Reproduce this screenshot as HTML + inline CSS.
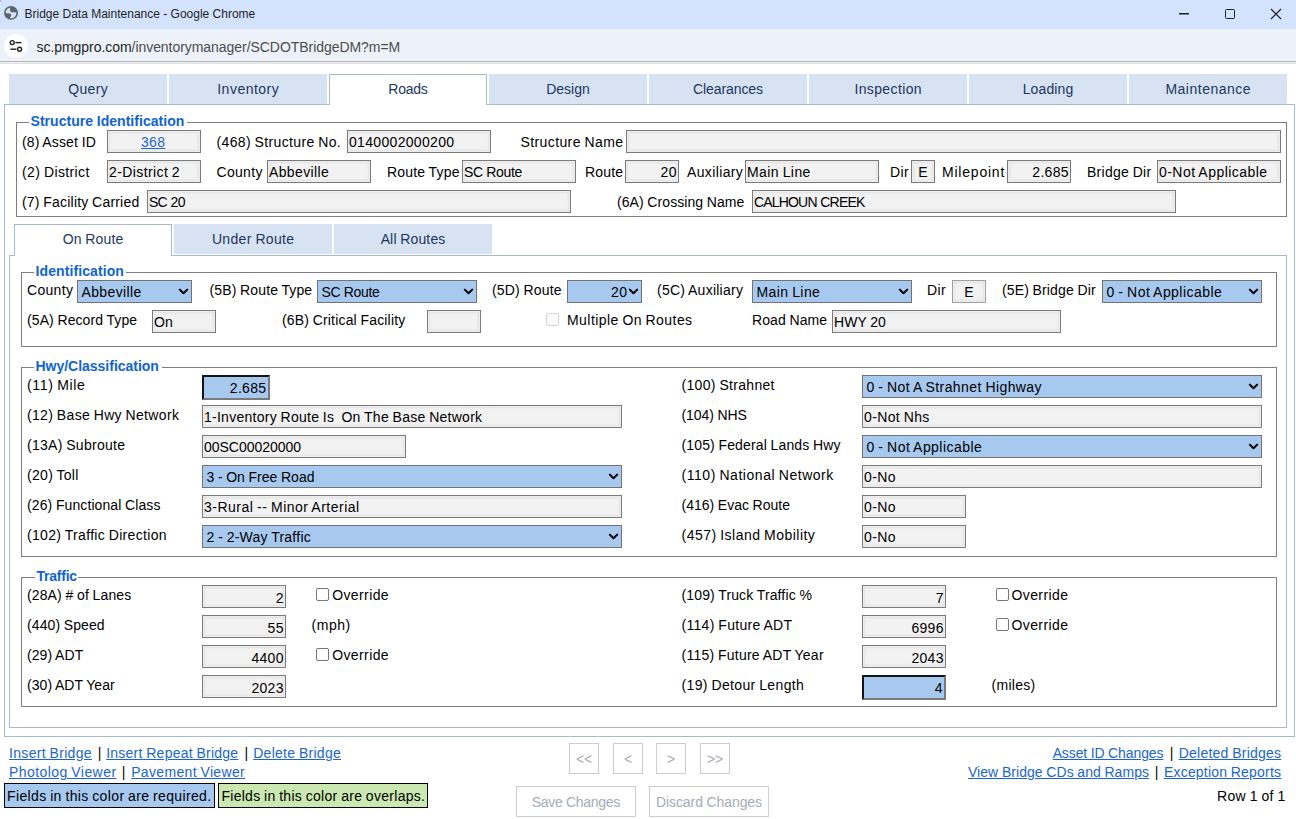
<!DOCTYPE html><html><head><meta charset="utf-8"><title>Bridge Data Maintenance</title><style>
*{margin:0;padding:0;box-sizing:border-box}
html,body{width:1296px;height:819px;overflow:hidden;background:#fff;font-family:"Liberation Sans",sans-serif;font-size:14px;color:#000}
body{position:relative}
.t{position:absolute;white-space:nowrap;line-height:16px;font-size:14px}
.inp{position:absolute;border:1px solid #7a7a7a;background:#f2f2f2;box-shadow:inset 0 0 0 1px #ededed, inset 0 0 2px 2px #e3e3e3}
.inpl{position:absolute;border:1px solid #a0a0a0;background:#f2f2f2;box-shadow:inset 0 0 0 1px #ededed, inset 0 0 2px 2px #e3e3e3}
.sel{position:absolute;border:1px solid #737373;background:#a7c9ef}
.foc{position:absolute;border:2px solid;border-color:#141414 #7a7a7a #7a7a7a #141414;background:#a7c9ef}
.chev{position:absolute}
.cb{position:absolute;border:1px solid #767676;border-radius:2px;background:#fff}
.cbd{position:absolute;border:1px solid #d4d4d4;border-radius:2px;background:#fafafa}
.fs{position:absolute;border:1px solid #7d7d7d}
.gap{position:absolute;background:#fff}
.leg{font-weight:bold;color:#0f64cf}
.tab{position:absolute;background:#d7e3f2}
.tabtxt{color:#22375e}
.pnl{position:absolute;border:1px solid #a5b9d2}
.lnk{color:#1a66cc;text-decoration:underline}
.navb{position:absolute;border:1px solid #cdcdcd;background:#fff}
.gray{color:#a3abb7}
</style></head><body>
<div style="position:absolute;left:0;top:0;width:1296px;height:29px;background:#d3e3fd"></div>
<div style="position:absolute;left:0;top:29px;width:1296px;height:32px;background:#edf2fa"></div>
<div style="position:absolute;left:0;top:60px;width:1296px;height:1px;background:#f0f4fc"></div>
<div style="position:absolute;left:0;top:61px;width:1296px;height:1px;background:#b4b4b4"></div>
<div style="position:absolute;left:0;top:62px;width:1296px;height:1px;background:#edf1f8"></div>
<div style="position:absolute;left:0;top:63px;width:1296px;height:1px;background:#e1e2df"></div>
<div style="position:absolute;left:0;top:0;width:2px;height:2px;background:#b9bdc6;border-bottom-right-radius:2px"></div>
<svg style="position:absolute;left:0px;top:0px" width="24" height="26" viewBox="0 0 24 26"><circle cx="11" cy="12.9" r="6.15" fill="none" stroke="#5f6368" stroke-width="1.6"/><path d="M10 7.2 C11.5 6.9 14.5 7.3 16.2 9.2 C17 10.2 17.3 11.2 17.3 12.3 C16 12.5 14.6 12.1 13.4 12.3 C12 12.5 10.6 12.2 10.3 11.2 C10.1 10.3 10.1 8.4 10 7.2Z" fill="#5f6368"/><path d="M4.9 13.3 C6.4 13.4 8.6 13.2 10 13.6 C11.2 14 11.6 15.2 11 16.2 C10.4 17.2 9.6 17.8 9.2 18.8 C7 18.3 5.2 16.2 4.9 13.3Z" fill="#5f6368"/></svg>
<div class="t " style="left:24.5px;top:6.34px;font-size:12px;color:#1f1f1f">Bridge Data Maintenance - Google Chrome</div>
<div style="position:absolute;left:1179px;top:13px;width:10px;height:1px;background:#1f1f1f;box-shadow:0 0.5px 0 #1f1f1f"></div>
<div style="position:absolute;left:1225px;top:9px;width:10px;height:10px;border:1px solid #1f1f1f;border-radius:1.5px"></div>
<svg style="position:absolute;left:1270px;top:8px" width="12" height="12" viewBox="0 0 12 12"><path d="M1 1 L11 11 M11 1 L1 11" stroke="#1f1f1f" stroke-width="1.1"/></svg>
<div style="position:absolute;left:4px;top:34px;width:24px;height:24px;border-radius:12px;background:#fff"></div>
<svg style="position:absolute;left:8px;top:38px" width="16" height="16" viewBox="0 0 16 16"><circle cx="4.2" cy="4.6" r="2" fill="none" stroke="#1f1f1f" stroke-width="1.4"/><path d="M7.4 4.6 H13.4" stroke="#1f1f1f" stroke-width="1.4"/><circle cx="11.6" cy="11.2" r="2" fill="none" stroke="#1f1f1f" stroke-width="1.4"/><path d="M2.4 11.2 H8.4" stroke="#1f1f1f" stroke-width="1.4"/></svg>
<div class="t " style="left:36.5px;top:38.53px;color:#1f1f1f;letter-spacing:-0.05px">sc.pmgpro.com<span style="color:#4d4d4d">/inventorymanager/SCDOTBridgeDM?m=M</span></div>
<div class="pnl" style="left:4px;top:104px;width:1291px;height:633px"></div>
<div class="tab" style="left:9px;top:74px;width:158px;height:30px"></div>
<div class="t tabtxt" style="left:-211.80921875px;width:600px;text-align:center;top:81.13px;letter-spacing:0.382px;word-spacing:0.000px;">Query</div>
<div class="tab" style="left:169px;top:74px;width:158px;height:30px"></div>
<div class="t tabtxt" style="left:-51.75468749999999px;width:600px;text-align:center;top:81.13px;letter-spacing:0.491px;word-spacing:0.000px;">Inventory</div>
<div style="position:absolute;left:329px;top:74px;width:158px;height:31px;background:#fff;border:1px solid #a5b9d2;border-bottom:none"></div>
<div class="t tabtxt" style="left:107.86562500000002px;width:600px;text-align:center;top:81.13px;letter-spacing:-0.269px;word-spacing:0.000px;">Roads</div>
<div class="tab" style="left:489px;top:74px;width:158px;height:30px"></div>
<div class="t tabtxt" style="left:268.0076822916667px;width:600px;text-align:center;top:81.13px;letter-spacing:0.015px;word-spacing:0.000px;">Design</div>
<div class="tab" style="left:649px;top:74px;width:158px;height:30px"></div>
<div class="t tabtxt" style="left:427.9659375px;width:600px;text-align:center;top:81.13px;letter-spacing:-0.068px;word-spacing:0.000px;">Clearances</div>
<div class="tab" style="left:809px;top:74px;width:158px;height:30px"></div>
<div class="t tabtxt" style="left:588.188359375px;width:600px;text-align:center;top:81.13px;letter-spacing:0.377px;word-spacing:0.000px;">Inspection</div>
<div class="tab" style="left:969px;top:74px;width:158px;height:30px"></div>
<div class="t tabtxt" style="left:748.0726562499999px;width:600px;text-align:center;top:81.13px;letter-spacing:0.145px;word-spacing:0.000px;">Loading</div>
<div class="tab" style="left:1129px;top:74px;width:158px;height:30px"></div>
<div class="t tabtxt" style="left:908.2482244318182px;width:600px;text-align:center;top:81.13px;letter-spacing:0.496px;word-spacing:0.000px;">Maintenance</div>
<div class="fs" style="left:16px;top:122px;width:1271px;height:95px"></div>
<div class="gap" style="left:29px;top:121px;width:158px;height:3px"></div>
<div class="t leg" style="left:30.5px;top:113.33px;letter-spacing:0.040px;word-spacing:-0.312px;">Structure Identification</div>
<div class="t " style="left:22.0px;top:134.03px;letter-spacing:0.134px;word-spacing:-0.406px;">(8) Asset ID</div>
<div class="inp" style="left:107px;top:130px;width:94px;height:23px;"></div>
<div class="t lnk" style="left:-146.83828125px;width:600px;text-align:center;top:134.33px;letter-spacing:0.323px;word-spacing:0.000px;">368</div>
<div class="t " style="left:216.5px;top:134.03px;letter-spacing:0.360px;word-spacing:-0.632px;">(468) Structure No.</div>
<div class="inp" style="left:347px;top:130px;width:144px;height:23px;"></div>
<div class="t " style="left:349.0px;top:134.33px;letter-spacing:0.323px;word-spacing:0.000px;">0140002000200</div>
<div class="t " style="left:520.5px;top:134.03px;letter-spacing:0.396px;word-spacing:-0.668px;">Structure Name</div>
<div class="inp" style="left:626px;top:130px;width:655px;height:23px;"></div>
<div class="t " style="left:22.0px;top:164.03px;letter-spacing:0.387px;word-spacing:-0.659px;">(2) District</div>
<div class="inp" style="left:107px;top:160px;width:94px;height:23px;"></div>
<div class="t " style="left:109.0px;top:164.33px;letter-spacing:0.403px;word-spacing:-0.675px;">2-District 2</div>
<div class="t " style="left:216.5px;top:164.03px;letter-spacing:0.313px;word-spacing:0.000px;">County</div>
<div class="inp" style="left:267px;top:160px;width:104px;height:23px;"></div>
<div class="t " style="left:269.0px;top:164.33px;letter-spacing:0.371px;word-spacing:0.000px;">Abbeville</div>
<div class="t " style="left:387.0px;top:164.03px;letter-spacing:0.175px;word-spacing:-0.447px;">Route Type</div>
<div class="inp" style="left:462px;top:160px;width:114px;height:23px;"></div>
<div class="t " style="left:464.0px;top:164.33px;letter-spacing:-0.367px;word-spacing:0.096px;">SC Route</div>
<div class="t " style="left:585.0px;top:164.03px;letter-spacing:0.199px;word-spacing:0.000px;">Route</div>
<div class="inp" style="left:625px;top:160px;width:54px;height:23px;"></div>
<div class="t " style="right:619.1765625px;top:164.33px;letter-spacing:0.323px;word-spacing:0.000px;">20</div>
<div class="t " style="left:687.0px;top:164.03px;letter-spacing:0.363px;word-spacing:0.000px;">Auxiliary</div>
<div class="inp" style="left:745px;top:160px;width:134px;height:23px;"></div>
<div class="t " style="left:747.0px;top:164.33px;letter-spacing:0.422px;word-spacing:-0.694px;">Main Line</div>
<div class="t " style="left:890.0px;top:164.03px;letter-spacing:0.403px;word-spacing:0.000px;">Dir</div>
<div class="inp" style="left:911px;top:160px;width:24px;height:23px;"></div>
<div class="t " style="left:623.0px;width:600px;text-align:center;top:164.33px;letter-spacing:0.000px;word-spacing:0.000px;">E</div>
<div class="t " style="left:942.0px;top:164.03px;letter-spacing:0.788px;word-spacing:0.000px;">Milepoint</div>
<div class="inp" style="left:1007px;top:160px;width:64px;height:23px;"></div>
<div class="t " style="right:227.21125000000006px;top:164.33px;letter-spacing:0.289px;word-spacing:0.000px;">2.685</div>
<div class="t " style="left:1087.0px;top:164.03px;letter-spacing:0.273px;word-spacing:-0.545px;">Bridge Dir</div>
<div class="inp" style="left:1157px;top:160px;width:124px;height:23px;"></div>
<div class="t " style="left:1159.0px;top:164.33px;letter-spacing:0.455px;word-spacing:-0.727px;">0-Not Applicable</div>
<div class="t " style="left:22.0px;top:194.03px;letter-spacing:0.200px;word-spacing:-0.472px;">(7) Facility Carried</div>
<div class="inp" style="left:147px;top:190px;width:424px;height:23px;"></div>
<div class="t " style="left:149.0px;top:194.33px;letter-spacing:-0.730px;word-spacing:0.458px;">SC 20</div>
<div class="t " style="left:617.0px;top:194.03px;letter-spacing:0.074px;word-spacing:-0.346px;">(6A) Crossing Name</div>
<div class="inp" style="left:752px;top:190px;width:424px;height:23px;"></div>
<div class="t " style="left:754.0px;top:194.33px;letter-spacing:-0.822px;word-spacing:0.550px;">CALHOUN CREEK</div>
<div class="pnl" style="left:9px;top:255px;width:1278px;height:473px"></div>
<div style="position:absolute;left:14px;top:224px;width:158px;height:32px;background:#fff;border:1px solid #a5b9d2;border-bottom:none"></div>
<div class="t tabtxt" style="left:-206.90580357142858px;width:600px;text-align:center;top:231.33px;letter-spacing:0.188px;word-spacing:-0.460px;">On Route</div>
<div class="tab" style="left:174px;top:224px;width:158px;height:30px"></div>
<div class="t tabtxt" style="left:-46.826015625px;width:600px;text-align:center;top:231.33px;letter-spacing:0.348px;word-spacing:-0.620px;">Under Route</div>
<div class="tab" style="left:334px;top:224px;width:158px;height:30px"></div>
<div class="t tabtxt" style="left:113.07187499999998px;width:600px;text-align:center;top:231.33px;letter-spacing:0.144px;word-spacing:-0.416px;">All Routes</div>
<div class="fs" style="left:21px;top:272px;width:1256px;height:75px"></div>
<div class="gap" style="left:34px;top:271px;width:92px;height:3px"></div>
<div class="t leg" style="left:35.5px;top:263.33px;letter-spacing:0.098px;word-spacing:0.000px;">Identification</div>
<div class="t " style="left:27.0px;top:282.13px;letter-spacing:0.313px;word-spacing:0.000px;">County</div>
<div class="sel" style="left:77px;top:280px;width:115px;height:23px;"></div>
<svg class="chev" style="left:178px;top:288px" width="11" height="8" viewBox="0 0 11 8"><path d="M1.8 1.6 L5.5 5.3 L9.2 1.6" fill="none" stroke="#000" stroke-width="2" stroke-linecap="round" stroke-linejoin="round"/></svg>
<div class="t " style="left:81.5px;top:284.33px;letter-spacing:0.371px;word-spacing:0.000px;">Abbeville</div>
<div class="t " style="left:209.5px;top:282.13px;letter-spacing:0.126px;word-spacing:-0.398px;">(5B) Route Type</div>
<div class="sel" style="left:317px;top:280px;width:160px;height:23px;"></div>
<svg class="chev" style="left:463px;top:288px" width="11" height="8" viewBox="0 0 11 8"><path d="M1.8 1.6 L5.5 5.3 L9.2 1.6" fill="none" stroke="#000" stroke-width="2" stroke-linecap="round" stroke-linejoin="round"/></svg>
<div class="t " style="left:321.5px;top:284.33px;letter-spacing:-0.367px;word-spacing:0.096px;">SC Route</div>
<div class="t " style="left:492.0px;top:282.13px;letter-spacing:0.159px;word-spacing:-0.431px;">(5D) Route</div>
<div class="sel" style="left:567px;top:280px;width:75px;height:23px;"></div>
<svg class="chev" style="left:628px;top:288px" width="11" height="8" viewBox="0 0 11 8"><path d="M1.8 1.6 L5.5 5.3 L9.2 1.6" fill="none" stroke="#000" stroke-width="2" stroke-linecap="round" stroke-linejoin="round"/></svg>
<div class="t " style="right:668.6765625px;top:284.33px;letter-spacing:0.323px;word-spacing:0.000px;">20</div>
<div class="t " style="left:657.0px;top:282.13px;letter-spacing:0.243px;word-spacing:-0.515px;">(5C) Auxiliary</div>
<div class="sel" style="left:752px;top:280px;width:160px;height:23px;"></div>
<svg class="chev" style="left:898px;top:288px" width="11" height="8" viewBox="0 0 11 8"><path d="M1.8 1.6 L5.5 5.3 L9.2 1.6" fill="none" stroke="#000" stroke-width="2" stroke-linecap="round" stroke-linejoin="round"/></svg>
<div class="t " style="left:756.5px;top:284.33px;letter-spacing:0.422px;word-spacing:-0.694px;">Main Line</div>
<div class="t " style="left:927.0px;top:282.13px;letter-spacing:0.403px;word-spacing:0.000px;">Dir</div>
<div class="inpl" style="left:952px;top:280px;width:34px;height:23px;"></div>
<div class="t " style="left:669.0px;width:600px;text-align:center;top:284.33px;letter-spacing:0.000px;word-spacing:0.000px;">E</div>
<div class="t " style="left:1002.0px;top:282.13px;letter-spacing:0.126px;word-spacing:-0.398px;">(5E) Bridge Dir</div>
<div class="sel" style="left:1102px;top:280px;width:160px;height:23px;"></div>
<svg class="chev" style="left:1248px;top:288px" width="11" height="8" viewBox="0 0 11 8"><path d="M1.8 1.6 L5.5 5.3 L9.2 1.6" fill="none" stroke="#000" stroke-width="2" stroke-linecap="round" stroke-linejoin="round"/></svg>
<div class="t " style="left:1106.5px;top:284.33px;letter-spacing:0.455px;word-spacing:-0.727px;">0 - Not Applicable</div>
<div class="t " style="left:27.0px;top:312.13px;letter-spacing:0.091px;word-spacing:-0.363px;">(5A) Record Type</div>
<div class="inp" style="left:152px;top:310px;width:64px;height:23px;"></div>
<div class="t " style="left:154.0px;top:314.33px;letter-spacing:0.162px;word-spacing:0.000px;">On</div>
<div class="t " style="left:282.0px;top:312.13px;letter-spacing:0.168px;word-spacing:-0.440px;">(6B) Critical Facility</div>
<div class="inp" style="left:427px;top:310px;width:54px;height:23px;"></div>
<div class="cbd" style="left:546px;top:313px;width:13px;height:13px;"></div>
<div class="t " style="left:567.0px;top:312.13px;letter-spacing:0.440px;word-spacing:-0.712px;">Multiple On Routes</div>
<div class="t " style="left:752.0px;top:312.13px;letter-spacing:0.098px;word-spacing:-0.370px;">Road Name</div>
<div class="inp" style="left:832px;top:310px;width:229px;height:23px;"></div>
<div class="t " style="left:834.0px;top:314.33px;letter-spacing:0.048px;word-spacing:-0.319px;">HWY 20</div>
<div class="fs" style="left:21px;top:367px;width:1256px;height:190px"></div>
<div class="gap" style="left:34px;top:366px;width:128px;height:3px"></div>
<div class="t leg" style="left:35.5px;top:358.33px;letter-spacing:-0.019px;word-spacing:0.000px;">Hwy/Classification</div>
<div class="t " style="left:27.0px;top:377.33px;letter-spacing:0.672px;word-spacing:-0.944px;">(11) Mile</div>
<div class="t " style="left:27.0px;top:407.33px;letter-spacing:0.334px;word-spacing:-0.606px;">(12) Base Hwy Network</div>
<div class="t " style="left:27.0px;top:437.33px;letter-spacing:0.277px;word-spacing:-0.549px;">(13A) Subroute</div>
<div class="t " style="left:27.0px;top:467.33px;letter-spacing:0.303px;word-spacing:-0.575px;">(20) Toll</div>
<div class="t " style="left:27.0px;top:497.33px;letter-spacing:0.096px;word-spacing:-0.368px;">(26) Functional Class</div>
<div class="t " style="left:27.0px;top:527.33px;letter-spacing:0.330px;word-spacing:-0.601px;">(102) Traffic Direction</div>
<div class="foc" style="left:202px;top:375px;width:68px;height:25px;"></div>
<div class="t " style="right:1029.71125px;top:379.83px;letter-spacing:0.289px;word-spacing:0.000px;">2.685</div>
<div class="inp" style="left:202px;top:405px;width:420px;height:23px;"></div>
<div class="t " style="left:204.0px;top:409.33px;letter-spacing:0.262px;word-spacing:-0.534px;">1-Inventory Route Is&nbsp; On The Base Network</div>
<div class="inp" style="left:202px;top:435px;width:204px;height:23px;"></div>
<div class="t " style="left:204.0px;top:439.33px;letter-spacing:-0.028px;word-spacing:0.000px;">00SC00020000</div>
<div class="sel" style="left:202px;top:465px;width:420px;height:23px;"></div>
<svg class="chev" style="left:608px;top:473px" width="11" height="8" viewBox="0 0 11 8"><path d="M1.8 1.6 L5.5 5.3 L9.2 1.6" fill="none" stroke="#000" stroke-width="2" stroke-linecap="round" stroke-linejoin="round"/></svg>
<div class="t " style="left:206.5px;top:468.83px;letter-spacing:0.011px;word-spacing:-0.283px;">3 - On Free Road</div>
<div class="inp" style="left:202px;top:495px;width:420px;height:23px;"></div>
<div class="t " style="left:204.0px;top:499.33px;letter-spacing:0.501px;word-spacing:-0.773px;">3-Rural -- Minor Arterial</div>
<div class="sel" style="left:202px;top:525px;width:420px;height:23px;"></div>
<svg class="chev" style="left:608px;top:533px" width="11" height="8" viewBox="0 0 11 8"><path d="M1.8 1.6 L5.5 5.3 L9.2 1.6" fill="none" stroke="#000" stroke-width="2" stroke-linecap="round" stroke-linejoin="round"/></svg>
<div class="t " style="left:206.5px;top:528.83px;letter-spacing:0.241px;word-spacing:-0.513px;">2 - 2-Way Traffic</div>
<div class="t " style="left:681.5px;top:377.33px;letter-spacing:0.315px;word-spacing:-0.587px;">(100) Strahnet</div>
<div class="t " style="left:681.5px;top:407.33px;letter-spacing:-0.070px;word-spacing:-0.202px;">(104) NHS</div>
<div class="t " style="left:681.5px;top:437.33px;letter-spacing:0.137px;word-spacing:-0.409px;">(105) Federal Lands Hwy</div>
<div class="t " style="left:681.5px;top:467.33px;letter-spacing:0.538px;word-spacing:-0.810px;">(110) National Network</div>
<div class="t " style="left:681.5px;top:497.33px;letter-spacing:0.006px;word-spacing:-0.277px;">(416) Evac Route</div>
<div class="t " style="left:681.5px;top:527.33px;letter-spacing:0.480px;word-spacing:-0.751px;">(457) Island Mobility</div>
<div class="sel" style="left:862px;top:375px;width:400px;height:23px;"></div>
<svg class="chev" style="left:1248px;top:383px" width="11" height="8" viewBox="0 0 11 8"><path d="M1.8 1.6 L5.5 5.3 L9.2 1.6" fill="none" stroke="#000" stroke-width="2" stroke-linecap="round" stroke-linejoin="round"/></svg>
<div class="t " style="left:866.5px;top:378.83px;letter-spacing:0.417px;word-spacing:-0.689px;">0 - Not A Strahnet Highway</div>
<div class="inp" style="left:862px;top:405px;width:400px;height:23px;"></div>
<div class="t " style="left:864.0px;top:409.33px;letter-spacing:0.374px;word-spacing:-0.646px;">0-Not Nhs</div>
<div class="sel" style="left:862px;top:435px;width:400px;height:23px;"></div>
<svg class="chev" style="left:1248px;top:443px" width="11" height="8" viewBox="0 0 11 8"><path d="M1.8 1.6 L5.5 5.3 L9.2 1.6" fill="none" stroke="#000" stroke-width="2" stroke-linecap="round" stroke-linejoin="round"/></svg>
<div class="t " style="left:866.5px;top:438.83px;letter-spacing:0.455px;word-spacing:-0.727px;">0 - Not Applicable</div>
<div class="inp" style="left:862px;top:465px;width:400px;height:23px;"></div>
<div class="t " style="left:864.0px;top:469.33px;letter-spacing:0.357px;word-spacing:0.000px;">0-No</div>
<div class="inp" style="left:862px;top:495px;width:104px;height:23px;"></div>
<div class="t " style="left:864.0px;top:499.33px;letter-spacing:0.357px;word-spacing:0.000px;">0-No</div>
<div class="inp" style="left:862px;top:525px;width:104px;height:23px;"></div>
<div class="t " style="left:864.0px;top:529.33px;letter-spacing:0.357px;word-spacing:0.000px;">0-No</div>
<div class="fs" style="left:21px;top:577px;width:1256px;height:130px"></div>
<div class="gap" style="left:35px;top:576px;width:43px;height:3px"></div>
<div class="t leg" style="left:36.5px;top:568.33px;letter-spacing:-0.235px;word-spacing:0.000px;">Traffic</div>
<div class="t " style="left:27.0px;top:587.33px;letter-spacing:0.127px;word-spacing:-0.398px;">(28A) # of Lanes</div>
<div class="inp" style="left:202px;top:585px;width:84px;height:23px;"></div>
<div class="t " style="right:1012.5px;top:589.83px;letter-spacing:0.000px;word-spacing:0.000px;">2</div>
<div class="t " style="left:27.0px;top:617.33px;letter-spacing:0.095px;word-spacing:-0.367px;">(440) Speed</div>
<div class="inp" style="left:202px;top:615px;width:84px;height:23px;"></div>
<div class="t " style="right:1012.1765625px;top:619.83px;letter-spacing:0.323px;word-spacing:0.000px;">55</div>
<div class="t " style="left:27.0px;top:647.33px;letter-spacing:0.074px;word-spacing:-0.346px;">(29) ADT</div>
<div class="inp" style="left:202px;top:645px;width:84px;height:23px;"></div>
<div class="t " style="right:1012.1765625px;top:649.83px;letter-spacing:0.323px;word-spacing:0.000px;">4400</div>
<div class="t " style="left:27.0px;top:677.33px;letter-spacing:0.053px;word-spacing:-0.325px;">(30) ADT Year</div>
<div class="inp" style="left:202px;top:675px;width:84px;height:23px;"></div>
<div class="t " style="right:1012.1765625px;top:679.83px;letter-spacing:0.323px;word-spacing:0.000px;">2023</div>
<div class="cb" style="left:316px;top:588px;width:13px;height:13px;"></div>
<div class="t " style="left:332.2px;top:587.33px;letter-spacing:0.392px;word-spacing:0.000px;">Override</div>
<div class="t " style="left:311.5px;top:617.33px;letter-spacing:0.547px;word-spacing:0.000px;">(mph)</div>
<div class="cb" style="left:316px;top:648px;width:13px;height:13px;"></div>
<div class="t " style="left:332.2px;top:647.33px;letter-spacing:0.392px;word-spacing:0.000px;">Override</div>
<div class="t " style="left:681.5px;top:587.33px;letter-spacing:0.133px;word-spacing:-0.404px;">(109) Truck Traffic %</div>
<div class="t " style="left:681.5px;top:617.33px;letter-spacing:0.305px;word-spacing:-0.577px;">(114) Future ADT</div>
<div class="t " style="left:681.5px;top:647.33px;letter-spacing:0.241px;word-spacing:-0.513px;">(115) Future ADT Year</div>
<div class="t " style="left:681.5px;top:677.33px;letter-spacing:0.355px;word-spacing:-0.627px;">(19) Detour Length</div>
<div class="inp" style="left:862px;top:585px;width:84px;height:23px;"></div>
<div class="t " style="right:352.5px;top:589.83px;letter-spacing:0.000px;word-spacing:0.000px;">7</div>
<div class="inp" style="left:862px;top:615px;width:84px;height:23px;"></div>
<div class="t " style="right:352.17656250000005px;top:619.83px;letter-spacing:0.323px;word-spacing:0.000px;">6996</div>
<div class="inp" style="left:862px;top:645px;width:84px;height:23px;"></div>
<div class="t " style="right:352.17656250000005px;top:649.83px;letter-spacing:0.323px;word-spacing:0.000px;">2043</div>
<div class="foc" style="left:862px;top:675px;width:84px;height:25px;"></div>
<div class="t " style="right:353.5px;top:679.83px;letter-spacing:0.000px;word-spacing:0.000px;">4</div>
<div class="cb" style="left:996px;top:588px;width:13px;height:13px;"></div>
<div class="t " style="left:1011.5px;top:587.33px;letter-spacing:0.392px;word-spacing:0.000px;">Override</div>
<div class="cb" style="left:996px;top:618px;width:13px;height:13px;"></div>
<div class="t " style="left:1011.5px;top:617.33px;letter-spacing:0.392px;word-spacing:0.000px;">Override</div>
<div class="t " style="left:991.5px;top:677.33px;letter-spacing:0.293px;word-spacing:0.000px;">(miles)</div>
<div class="t lnk" style="left:9.0px;top:745.03px;letter-spacing:0.319px;word-spacing:-0.591px;">Insert Bridge</div>
<div class="t" style="left:97.70px;top:745.03px;">|</div>
<div class="t lnk" style="left:106.2px;top:745.03px;letter-spacing:0.239px;word-spacing:-0.511px;">Insert Repeat Bridge</div>
<div class="t" style="left:244.40px;top:745.03px;">|</div>
<div class="t lnk" style="left:253.2px;top:745.03px;letter-spacing:0.273px;word-spacing:-0.545px;">Delete Bridge</div>
<div class="t lnk" style="left:9.0px;top:764.13px;letter-spacing:0.432px;word-spacing:-0.704px;">Photolog Viewer</div>
<div class="t" style="left:121.70px;top:764.13px;">|</div>
<div class="t lnk" style="left:131.2px;top:764.13px;letter-spacing:0.329px;word-spacing:-0.601px;">Pavement Viewer</div>
<div style="position:absolute;left:4px;top:783px;width:211px;height:25px;border:1px solid #000;background:#a7c9ef"></div>
<div class="t " style="left:7.0px;top:788.13px;letter-spacing:0.364px;word-spacing:-0.636px;">Fields in this color are required.</div>
<div style="position:absolute;left:218px;top:783px;width:210px;height:25px;border:1px solid #000;background:#cbe8b0"></div>
<div class="t " style="left:221.4px;top:788.13px;letter-spacing:0.289px;word-spacing:-0.560px;">Fields in this color are overlaps.</div>
<div class="navb" style="left:569px;top:743px;width:30px;height:31px;"></div>
<div class="t gray" style="left:283.89609375px;width:600px;text-align:center;top:751.33px;letter-spacing:-0.208px;word-spacing:0.000px;">&lt;&lt;</div>
<div class="navb" style="left:613px;top:743px;width:30px;height:31px;"></div>
<div class="t gray" style="left:328.0px;width:600px;text-align:center;top:751.33px;letter-spacing:0.000px;word-spacing:0.000px;">&lt;</div>
<div class="navb" style="left:656px;top:743px;width:30px;height:31px;"></div>
<div class="t gray" style="left:371.0px;width:600px;text-align:center;top:751.33px;letter-spacing:0.000px;word-spacing:0.000px;">&gt;</div>
<div class="navb" style="left:700px;top:743px;width:30px;height:31px;"></div>
<div class="t gray" style="left:414.89609375px;width:600px;text-align:center;top:751.33px;letter-spacing:-0.208px;word-spacing:0.000px;">&gt;&gt;</div>
<div class="navb" style="left:516px;top:786px;width:120px;height:31px;"></div>
<div class="t gray" style="left:275.8389204545455px;width:600px;text-align:center;top:793.83px;letter-spacing:-0.322px;word-spacing:0.050px;">Save Changes</div>
<div class="navb" style="left:649px;top:786px;width:120px;height:31px;"></div>
<div class="t gray" style="left:408.9630022321429px;width:600px;text-align:center;top:793.83px;letter-spacing:-0.074px;word-spacing:-0.198px;">Discard Changes</div>
<div class="t lnk" style="right:132.61037946428564px;top:745.03px;letter-spacing:-0.110px;word-spacing:-0.161px;">Asset ID Changes</div>
<div class="t" style="left:1169.70px;top:745.03px;">|</div>
<div class="t lnk" style="right:14.774330357142844px;top:745.03px;letter-spacing:0.226px;word-spacing:-0.498px;">Deleted Bridges</div>
<div class="t lnk" style="right:146.94613095238105px;top:764.13px;letter-spacing:0.054px;word-spacing:-0.326px;">View Bridge CDs and Ramps</div>
<div class="t" style="left:1154.70px;top:764.13px;">|</div>
<div class="t lnk" style="right:14.805761718750091px;top:764.13px;letter-spacing:0.194px;word-spacing:-0.466px;">Exception Reports</div>
<div class="t " style="right:10.449107142857201px;top:787.63px;letter-spacing:0.351px;word-spacing:-0.623px;">Row 1 of 1</div>
</body></html>
